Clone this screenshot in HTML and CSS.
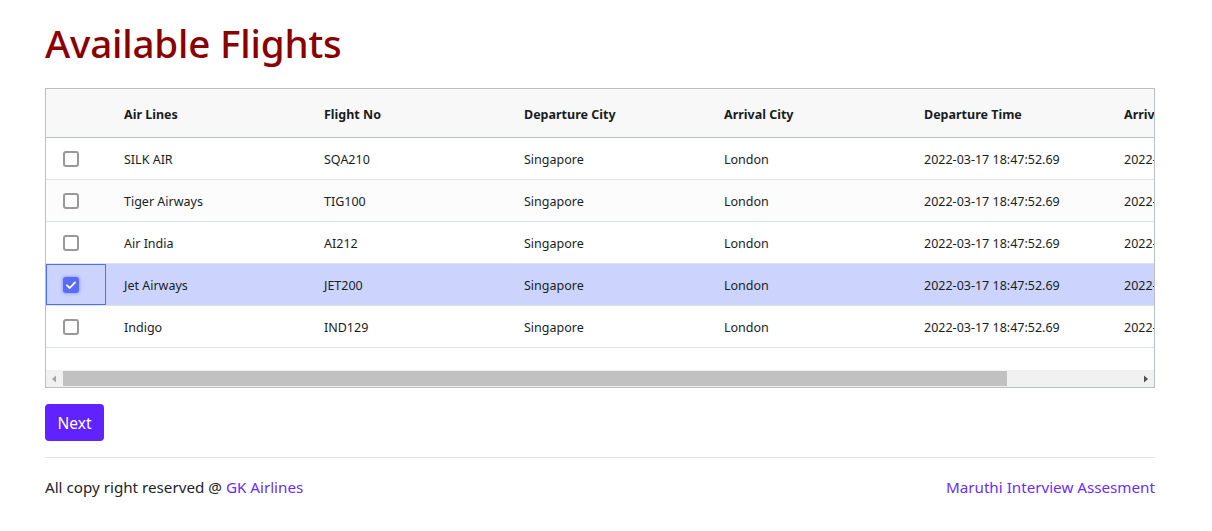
FILE: index.html
```html
<!DOCTYPE html>
<html>
<head>
<meta charset="utf-8">
<link rel="stylesheet" href="styles.css">
</head>
<body>
<div class="container">
  <h1 class="title">Available Flights</h1>
  <div class="grid">
    <div class="viewport">
      <div class="row header">
        <div class="cell check"></div>
        <div class="cell">Air Lines</div>
        <div class="cell">Flight No</div>
        <div class="cell">Departure City</div>
        <div class="cell">Arrival City</div>
        <div class="cell">Departure Time</div>
        <div class="cell">Arrival Time</div>
      </div>
      <div class="row">
        <div class="cell check"><span class="box"></span></div>
        <div class="cell">SILK AIR</div>
        <div class="cell">SQA210</div>
        <div class="cell">Singapore</div>
        <div class="cell">London</div>
        <div class="cell">2022-03-17 18:47:52.69</div>
        <div class="cell">2022-03-17 18:47:52.69</div>
      </div>
      <div class="row odd">
        <div class="cell check"><span class="box"></span></div>
        <div class="cell">Tiger Airways</div>
        <div class="cell">TIG100</div>
        <div class="cell">Singapore</div>
        <div class="cell">London</div>
        <div class="cell">2022-03-17 18:47:52.69</div>
        <div class="cell">2022-03-17 18:47:52.69</div>
      </div>
      <div class="row">
        <div class="cell check"><span class="box"></span></div>
        <div class="cell">Air India</div>
        <div class="cell">AI212</div>
        <div class="cell">Singapore</div>
        <div class="cell">London</div>
        <div class="cell">2022-03-17 18:47:52.69</div>
        <div class="cell">2022-03-17 18:47:52.69</div>
      </div>
      <div class="row selected">
        <div class="cell check focused"><span class="box checked"><svg viewBox="0 0 16 16" width="16" height="16"><path d="M4 8.3 L6.8 11 L12 5.4" fill="none" stroke="#fff" stroke-width="1.8" stroke-linecap="round" stroke-linejoin="round"/></svg></span></div>
        <div class="cell">Jet Airways</div>
        <div class="cell">JET200</div>
        <div class="cell">Singapore</div>
        <div class="cell">London</div>
        <div class="cell">2022-03-17 18:47:52.69</div>
        <div class="cell">2022-03-17 18:47:52.69</div>
      </div>
      <div class="row">
        <div class="cell check"><span class="box"></span></div>
        <div class="cell">Indigo</div>
        <div class="cell">IND129</div>
        <div class="cell">Singapore</div>
        <div class="cell">London</div>
        <div class="cell">2022-03-17 18:47:52.69</div>
        <div class="cell">2022-03-17 18:47:52.69</div>
      </div>
      <div class="spacer"></div>
    </div>
    <div class="hscroll">
      <div class="arrow left"><svg viewBox="0 0 16 16" width="16" height="16"><path d="M10 4.5 L6 8 L10 11.5 Z" fill="#a3a3a3"/></svg></div>
      <div class="track"><div class="thumb"></div></div>
      <div class="arrow right"><svg viewBox="0 0 16 16" width="16" height="16"><path d="M6 4.5 L10 8 L6 11.5 Z" fill="#505050"/></svg></div>
    </div>
  </div>
  <button class="btn">Next</button>
  <hr class="rule">
  <footer class="footer">
    <span>All copy right reserved @ <a href="#" class="link">GK Airlines</a></span>
    <a href="#" class="link">Maruthi Interview Assesment</a>
  </footer>
</div>
</body>
</html>
```
FILE: styles.css
```css
* { box-sizing: border-box; }
html, body { margin: 0; padding: 0; background: #fff; }
body {
  font-family: "Noto Sans", "Open Sans", sans-serif;
  color: #212529;
  font-size: 15px;
}
.container {
  width: 1110px;
  margin-left: 45px;
  padding-top: 19px;
}
.title {
  margin: 0 0 21px 0;
  font-size: 38.6px;
  line-height: 48px;
  font-weight: 500;
  color: #8b0000;
  letter-spacing: -0.2px;
}
.grid {
  border: 1px solid #babfc7;
  height: 300px;
  display: flex;
  flex-direction: column;
  overflow: hidden;
}
.viewport { flex: 1; overflow: hidden; }
.row {
  display: flex;
  height: 42px;
  border-bottom: 1px solid #dde2eb;
  background: #fff;
  font-size: 12.5px;
  color: #181d1f;
  white-space: nowrap;
}
.row.odd { background: #fcfcfc; }
.row.selected { background: #ccd4fd; }
.row.header {
  height: 49px;
  background: #f8f8f8;
  border-bottom: 1px solid #babfc7;
  font-weight: 700;
}
.cell {
  flex: 0 0 200px;
  padding-left: 17px;
  padding-top: 2px;
  display: flex;
  align-items: center;
  border: 1px solid transparent;
}
.cell.check {
  flex: 0 0 60px;
  padding-left: 16px;
  padding-top: 0;
}
.cell.focused { border-color: #4f6ff0; }
.box {
  width: 16px;
  height: 16px;
  border: 2px solid #999;
  border-radius: 3px;
  background: #fff;
  display: block;
  position: relative;
}
.box.checked {
  border: none;
  background: #5a6cf3;
  box-shadow: 0 0 3px 1px rgba(90, 108, 243, 0.45);
}
.box.checked svg { display: block; }
.spacer { height: 22px; }
.hscroll {
  height: 17px;
  background: #f1f1f1;
  display: flex;
  flex: 0 0 17px;
}
.arrow { flex: 0 0 16px; display: flex; align-items: center; justify-content: center; }
.arrow svg { display: block; }
.track { flex: 1; padding: 1px 1px 1px 1px; }
.thumb {
  width: 944px;
  height: 15px;
  background: #c1c1c1;
}
.btn {
  margin-top: 16px;
  display: block;
  background: #6023ff;
  color: #fff;
  border: none;
  border-radius: 4px;
  font-family: inherit;
  font-size: 15.5px;
  line-height: 24px;
  padding: 7px 12px 6px;
  width: 59px;
  text-align: center;
}
.rule {
  margin: 16px 0 0 0;
  border: 0;
  border-top: 1px solid #e4e4e4;
}
.footer {
  display: flex;
  justify-content: space-between;
  padding-top: 17px;
  line-height: 24px;
  font-size: 15.2px;
}
.link { color: #6a2cff; text-decoration: none; }
```
